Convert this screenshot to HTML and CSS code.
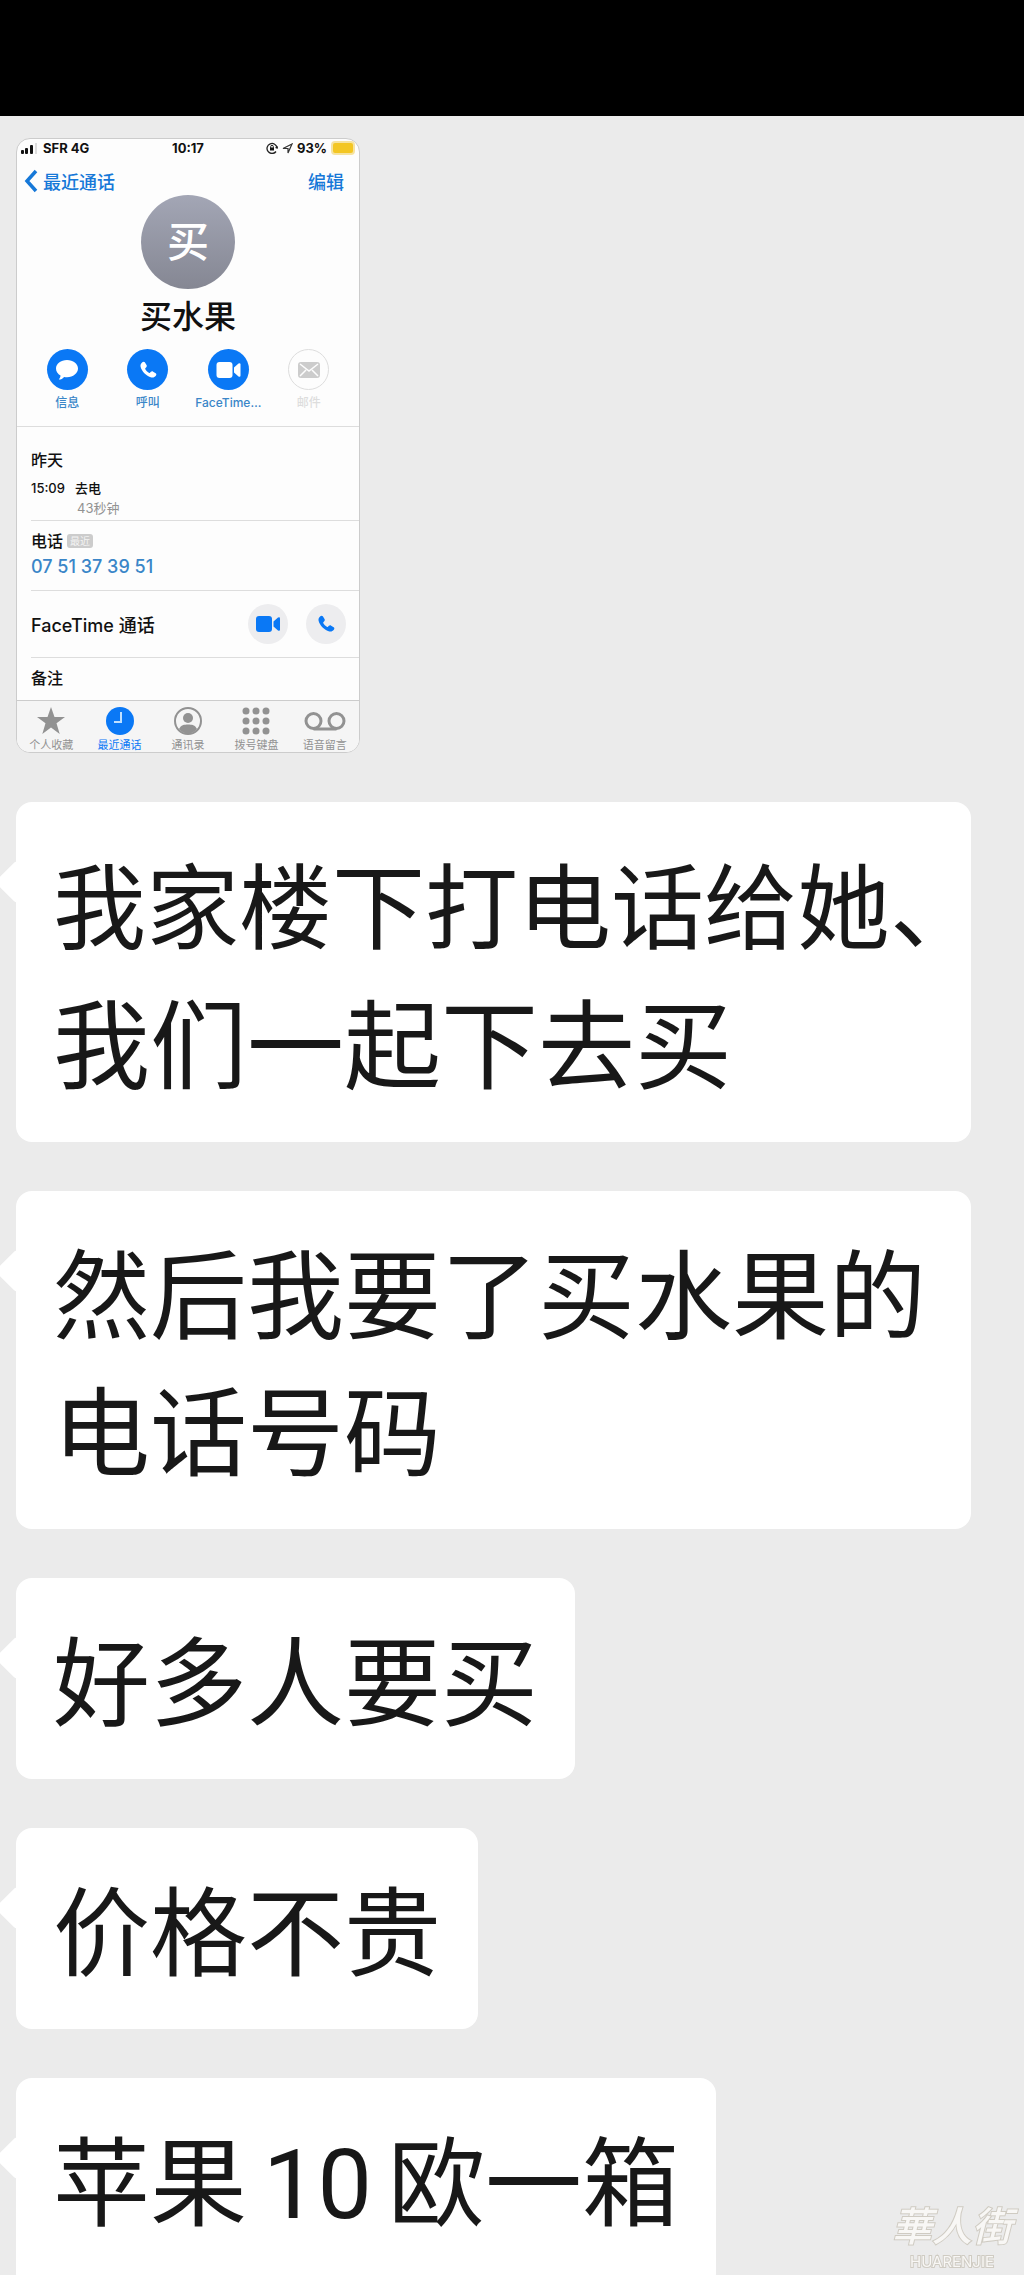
FILE: index.html
```html
<!DOCTYPE html>
<html lang="zh-CN">
<head>
  <meta charset="UTF-8">
  <meta name="viewport" content="width=device-width, initial-scale=1.0">
  <title>聊天记录</title>
  <link rel="stylesheet" href="styles.css">
</head>
<body>
  <!-- shared icons -->
  <svg class="sprite" aria-hidden="true">
    <symbol id="phone" viewBox="0 0 24 24">
      <path d="M5.2 2.6c1-.9 2.300-.8 3 .2l2 3.100c.6 1 .4 1.900-.3 2.700l-1.100 1.200c-.3.4-.3.800 0 1.300.9 1.600 2.500 3.200 4.200 4.200.5.3.9.3 1.300 0l1.200-1.100c.8-.7 1.700-.8 2.700-.2l3 2c1 .7 1.100 2 .2 3-1.500 1.700-3.200 2.500-5.400 1.900C9.600 19.200 4.400 13.600 3.100 8.200 2.600 6 3.500 4.100 5.200 2.600z"/>
    </symbol>
    <symbol id="video" viewBox="0 0 24 16">
      <rect x="0" y="0" width="16" height="16" rx="3"/>
      <path d="M17.500 5.500 22 1.500q2-1 2 1v11q0 2-2 1l-4.500-4z"/>
    </symbol>
  </svg>

  <div class="top-bar"></div>
  <main class="chat">
    <section class="shot">
      <div class="status">
        <div class="status-left">
          <svg width="16" height="11" viewBox="0 0 16 11"><rect x="0" y="7" width="3" height="4" rx="1"/><rect x="4" y="5" width="3" height="6" rx="1"/><rect x="9" y="2" width="3" height="9" rx="1"/><rect x="14" y="0" width="2" height="11" fill="#ddd"/></svg>
          <span>SFR 4G</span>
        </div>
        <span>10:17</span>
        <div class="status-right">
          <svg width="12" height="12" viewBox="0 0 12 12"><path d="M10 9.500A5 5 0 1 1 11 6l-1.500-.5M11 6l.8-1.500" fill="none" stroke="#222" stroke-width="1.300"/><rect x="4" y="5.500" width="4" height="3"/><path d="M4.700 6V4.600a1.300 1.300 0 0 1 2.600 0V6" fill="none" stroke="#222"/></svg>
          <svg width="11" height="11" viewBox="0 0 11 11"><path d="M1 5.500 10 1 6 10V5.500z" fill="none" stroke="#333" stroke-width="1.200"/></svg>
          <span>93%</span>
          <i class="battery"></i>
        </div>
      </div>

      <div class="nav">
        <button class="nav-btn"><svg width="14" height="24" viewBox="0 0 14 24"><path d="M12 2 3 12l9 10" fill="none" stroke="#1678d8" stroke-width="3.500"/></svg>最近通话</button>
        <button class="nav-btn">编辑</button>
      </div>

      <div class="avatar">买</div>
      <h1 class="name">买水果</h1>

      <div class="actions">
        <button class="action"><span class="action-icon"><svg width="24" height="22" viewBox="0 0 24 22"><path d="M12 1C5.800 1 1 4.800 1 9.600c0 3 1.800 5.500 4.500 7-.1 1.600-.7 2.800-1.700 4 2.300-.2 4-1.100 5.300-2.700.9.200 1.900.3 2.900.3 6.200 0 11-3.800 11-8.600S18.200 1 12 1z"/></svg></span>信息</button>
        <button class="action"><span class="action-icon"><svg width="20" height="20"><use href="#phone"/></svg></span>呼叫</button>
        <button class="action"><span class="action-icon"><svg width="25" height="16"><use href="#video"/></svg></span>FaceTime…</button>
        <button class="action off" disabled><span class="action-icon"><svg width="22" height="16" viewBox="0 0 22 16"><rect width="22" height="16" rx="3"/><path d="m2 2 9 7 9-7M2 14l6-6M20 14l-6-6" fill="none" stroke="#fdfdfd" stroke-width="1.500"/></svg></span>邮件</button>
      </div>

      <div class="row log">
        <h2>昨天</h2>
        <div class="log-line"><span>15:09</span><span>去电</span></div>
        <div class="log-time">43秒钟</div>
      </div>
      <div class="row number">
        <div class="number-head"><h2>电话</h2><span class="badge">最近</span></div>
        <a href="tel:0751373951">07 51 37 39 51</a>
      </div>
      <div class="row facetime">
        <span>FaceTime 通话</span>
        <button class="round" aria-label="视频"><svg width="24" height="16"><use href="#video"/></svg></button>
        <button class="round" aria-label="语音"><svg width="20" height="20"><use href="#phone"/></svg></button>
      </div>
      <div class="row note"><h2>备注</h2></div>

      <nav class="tabs">
        <a href="#"><svg width="30" height="28" viewBox="0 0 30 28"><path d="m15 0 3.500 10H29l-8.500 6.300L23.700 27 15 20.500 6.300 27l3.200-10.700L1 10h10.500z"/></svg>个人收藏</a>
        <a href="#" class="active"><svg width="28" height="28" viewBox="0 0 28 28"><circle cx="14" cy="14" r="14"/><path d="M15 5v10H8" fill="none" stroke="#bfe0ff" stroke-width="2"/></svg>最近通话</a>
        <a href="#"><svg width="28" height="28" viewBox="0 0 28 28"><circle cx="14" cy="14" r="13" fill="none" stroke="#929292" stroke-width="2"/><circle cx="14" cy="11" r="5"/><path d="M5 22c2-4 5-4.500 9-4.500s7 .5 9 4.500c-5 6-13 6-18 0z"/></svg>通讯录</a>
        <a href="#"><svg width="28" height="28" viewBox="0 0 28 28"><g><circle cx="4" cy="4" r="3.500"/><circle cx="14" cy="4" r="3.500"/><circle cx="24" cy="4" r="3.500"/><circle cx="4" cy="14" r="3.500"/><circle cx="14" cy="14" r="3.500"/><circle cx="24" cy="14" r="3.500"/><circle cx="4" cy="24" r="3.500"/><circle cx="14" cy="24" r="3.500"/><circle cx="24" cy="24" r="3.500"/></g></svg>拨号键盘</a>
        <a href="#"><svg width="42" height="28" viewBox="0 0 42 28"><g fill="none" stroke="#929292" stroke-width="3"><circle cx="9.500" cy="14" r="7.500"/><circle cx="32.500" cy="14" r="7.500"/><path d="M9.500 22h23"/></g></svg>语音留言</a>
      </nav>
    </section>

    <p class="bubble wide"><span class="tight">我家楼下打电话给她、</span><br>我们一起下去买</p>
    <p class="bubble wide">然后我要了买水果的<br>电话号码</p>
    <p class="bubble">好多人要买</p>
    <p class="bubble">价格不贵</p>
    <p class="bubble">苹果<span class="num">10</span>欧一箱</p>
  </main>

  <div class="watermark">
    <span class="mark-name">華人街</span>
    <span class="mark-latin">HUARENJIE</span>
  </div>
</body>
</html>
```
FILE: styles.css
```css
*{
  box-sizing: border-box;
}
body{
  display: flex;
  flex-direction: column;
  height: 100vh;
  margin: 0;
  overflow: hidden;
  background-color: #ebebeb;
  font-family: Inter, "Noto Sans CJK SC", sans-serif;
  color: #111;
}
h1,h2,p{
  margin: 0;
}
button{
  padding: 0;
  border: 0;
  background: none;
  font: inherit;
  color: inherit;
}
a{
  color: inherit;
  text-decoration: none;
}
svg{
  display: block;
  flex: none;
  fill: currentColor;
}
.sprite{
  position: absolute;
  width: 0;
  height: 0;
}
.top-bar{
  flex: none;
  height: 116px;
  background-color: #000;
}
.chat{
  display: flex;
  flex-direction: column;
  align-items: flex-start;
  gap: 49px;
  padding: 22px 53px 0 16px;
}

/* phone screenshot */
.shot{
  flex: none;
  width: 344px;
  border: 1px solid #ccc;
  border-radius: 14px;
  background-color: #fdfdfd;
  overflow: hidden;
}
.status{
  display: grid;
  grid-template-columns: 1fr auto 1fr;
  align-items: center;
  height: 18px;
  padding: 0 4px;
  font-size: 13px;
  font-weight: 700;
}
.status-left,.status-right{
  display: flex;
  align-items: center;
  gap: 6px;
}
.status-right{
  justify-content: flex-end;
  gap: 4px;
}
.battery{
  width: 24px;
  height: 14px;
  border: 2px solid #f6e3a0;
  border-radius: 4px;
  background-color: #f3c623;
}
.nav{
  display: flex;
  justify-content: space-between;
  height: 38px;
  padding: 10px 15px 0 7px;
}
.nav-btn{
  display: flex;
  align-items: center;
  gap: 5px;
  height: 28px;
  font-size: 18px;
  font-weight: 500;
  color: #1678d8;
}
.avatar{
  width: 94px;
  height: 94px;
  margin: 0 auto;
  border-radius: 50%;
  background: linear-gradient(#a3a6b5, #858793);
  font-size: 42px;
  font-weight: 500;
  line-height: 94px;
  text-align: center;
  color: #fff;
}
.name{
  margin-top: 10px;
  font-size: 32px;
  font-weight: 500;
  line-height: 36px;
  text-align: center;
}
.actions{
  display: grid;
  grid-template-columns: repeat(4, 1fr);
  height: 92px;
  padding: 14px 10px 0;
  border-bottom: 1px solid #ddd;
}
.action{
  display: flex;
  flex-direction: column;
  align-items: center;
  gap: 4px;
  font-size: 12px;
  font-weight: 500;
  line-height: 18px;
  color: #3a86c8;
}
.action-icon{
  display: flex;
  align-items: center;
  justify-content: center;
  width: 41px;
  height: 41px;
  border-radius: 50%;
  background-color: #0a78f5;
  color: #fff;
}
.action.off{
  color: #ddd;
}
.off .action-icon{
  border: 1px solid #ddd;
  background: none;
  color: #ccc;
}
.row{
  margin-left: 14px;
  border-bottom: 1px solid #ddd;
}
.row h2{
  font-size: 16px;
  font-weight: 500;
  line-height: 20px;
}
.log{
  height: 94px;
  padding-top: 23px;
  font-size: 13px;
  font-weight: 500;
  line-height: 20px;
}
.log-line{
  display: flex;
  gap: 10px;
  margin-top: 8px;
}
.log-time{
  margin-left: 46px;
  font-weight: 400;
  color: #929292;
}
.number{
  height: 70px;
  padding-top: 10px;
}
.number-head{
  display: flex;
  align-items: center;
  gap: 4px;
}
.badge{
  padding: 0 3px;
  border-radius: 3px;
  background-color: #ccc;
  font-size: 10px;
  line-height: 14px;
  color: #f4f4f4;
}
.number a{
  display: block;
  margin-top: 4px;
  font-size: 18px;
  line-height: 24px;
  font-weight: 500;
  color: #3a86c8;
}
.facetime{
  display: flex;
  align-items: center;
  gap: 18px;
  height: 67px;
  padding-right: 13px;
  font-size: 18px;
  font-weight: 500;
}
.facetime span{
  flex: 1;
}
.round{
  display: flex;
  align-items: center;
  justify-content: center;
  width: 40px;
  height: 40px;
  border-radius: 50%;
  background-color: #ededef;
  color: #0a78f5;
}
.note{
  height: 42px;
  padding-top: 10px;
  border-bottom: 0;
}
.tabs{
  display: grid;
  grid-template-columns: repeat(5, 1fr);
  height: 52px;
  padding-top: 6px;
  border-top: 1px solid #ccc;
  background-color: #f5f5f5;
}
.tabs a{
  display: flex;
  flex-direction: column;
  align-items: center;
  gap: 3px;
  font-size: 11px;
  line-height: 14px;
  color: #929292;
}
.tabs .active{
  color: #0a78f5;
}

/* messages */
.bubble{
  position: relative;
  padding: 29px 37px 35px;
  border-radius: 16px;
  background-color: #fff;
  font-family: "Noto Sans CJK SC", sans-serif;
  font-size: 97px;
  line-height: 137px;
  white-space: nowrap;
  color: #181818;
}
.bubble::before{
  content: "";
  position: absolute;
  top: 65px;
  left: -15px;
  width: 30px;
  height: 30px;
  border-radius: 3px;
  background-color: #fff;
  transform: rotate(45deg);
}
.wide{
  align-self: stretch;
}
.tight{
  font-size: 93px;
}
.num{
  margin: 0 16px;
  font-family: Roboto, sans-serif;
}

.watermark{
  position: fixed;
  right: 12px;
  bottom: 4px;
  display: flex;
  flex-direction: column;
  align-items: center;
  color: #f8f7f5;
  -webkit-text-stroke: 2px #cfcbc2;
  paint-order: stroke fill;
}
.mark-name{
  font-family: "Noto Sans CJK TC", sans-serif;
  font-size: 40px;
  font-style: italic;
  font-weight: 500;
  line-height: 58px;
}
.mark-latin{
  font-size: 15px;
  line-height: 18px;
}
```
